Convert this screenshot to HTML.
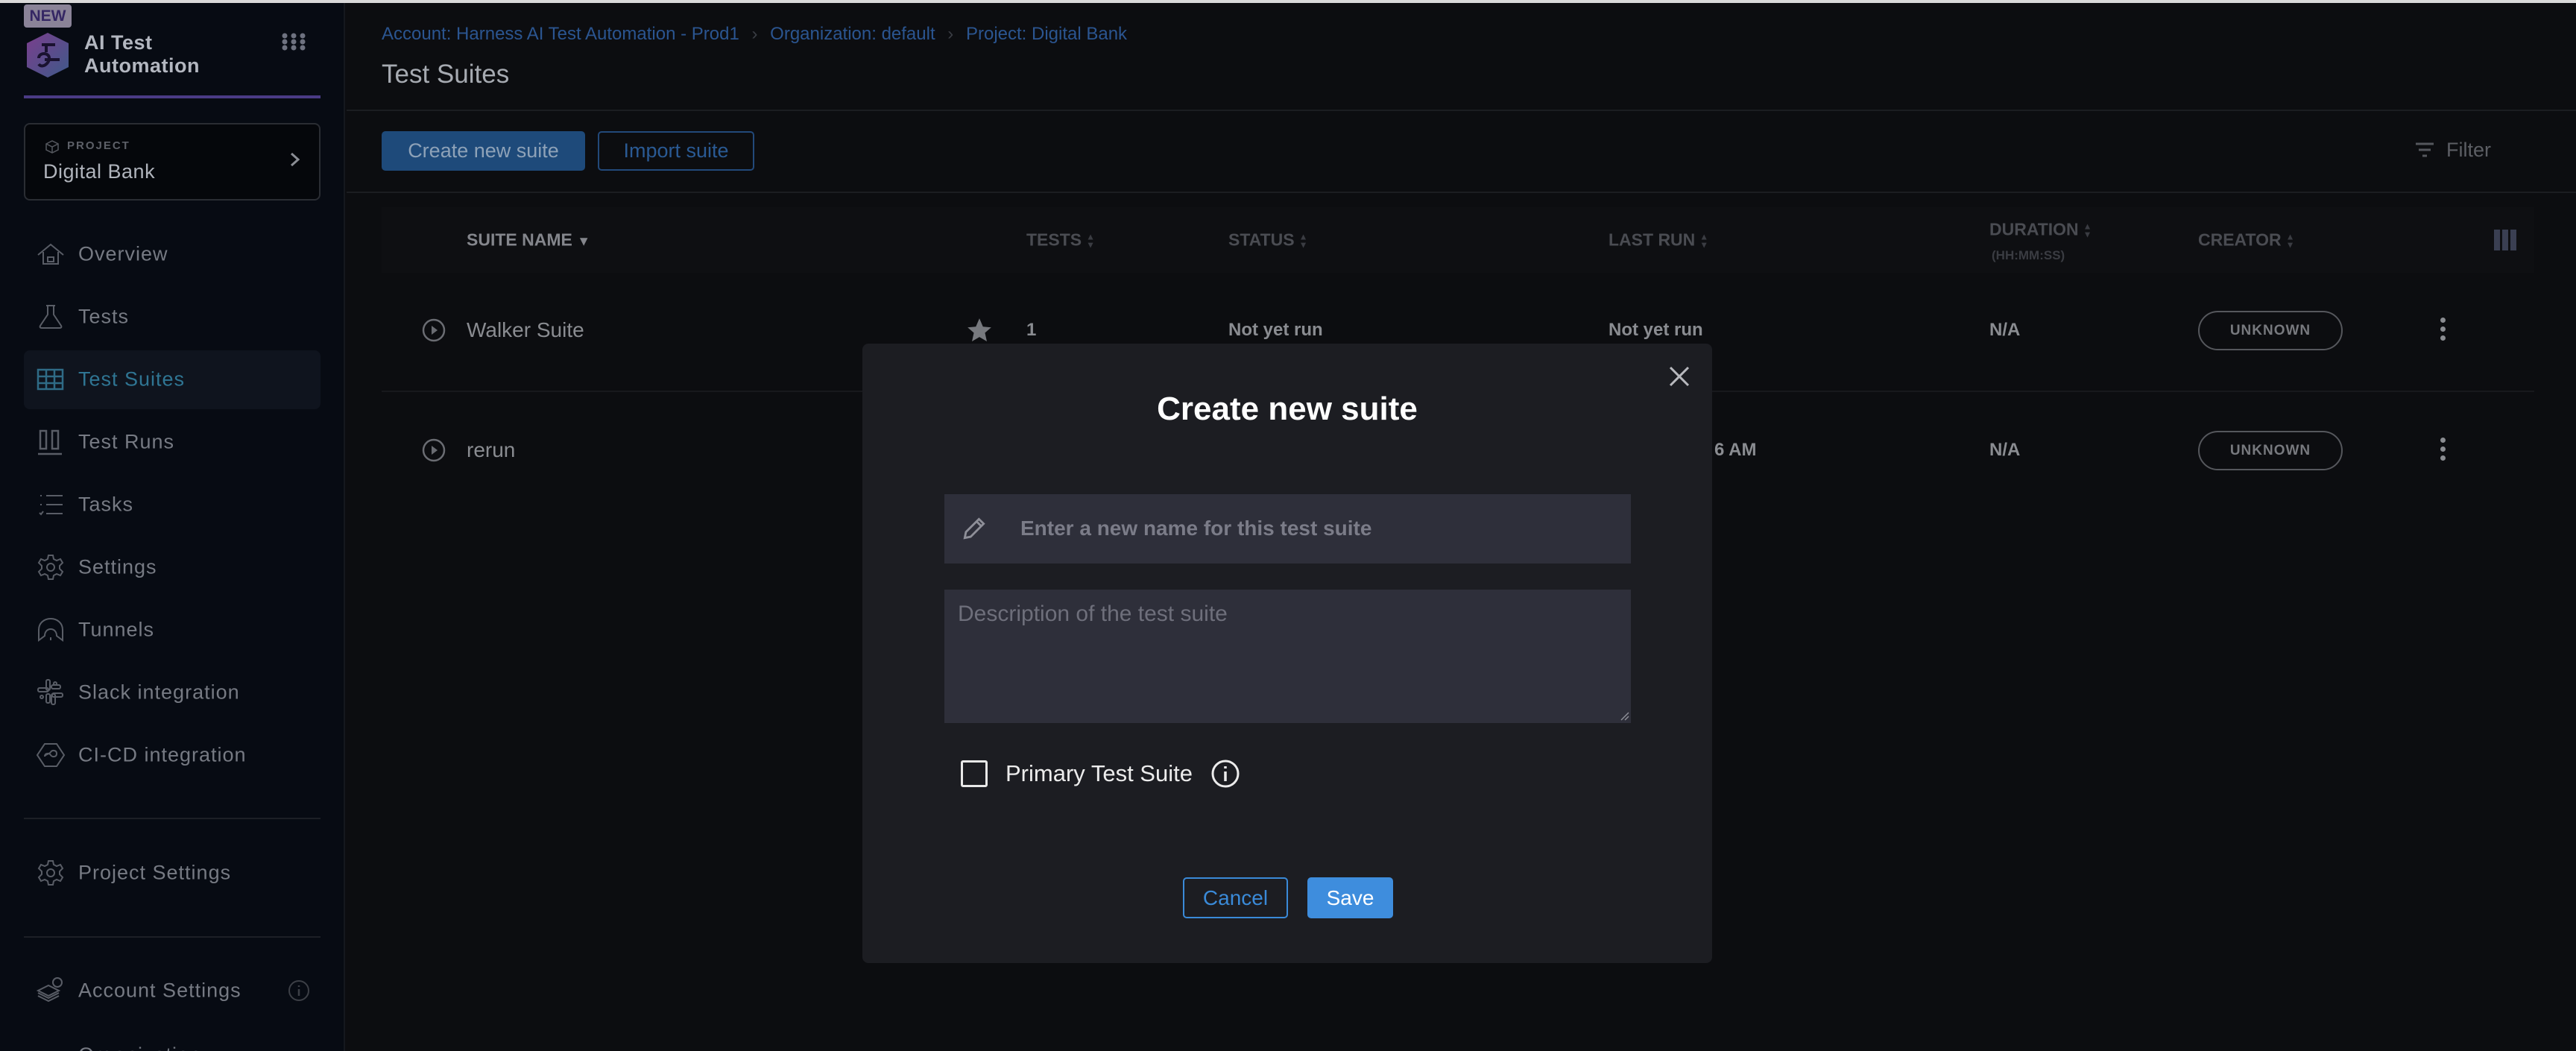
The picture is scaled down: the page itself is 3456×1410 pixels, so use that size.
<!DOCTYPE html>
<html style="overflow:hidden;width:3456px;height:1410px"><head><meta charset="utf-8"><style>
*{box-sizing:border-box;margin:0;padding:0}
body{width:3456px;height:1410px;background:#0c0d10;font-family:"Liberation Sans",sans-serif;overflow:hidden}
#wrap{position:relative;width:3456px;height:1410px;overflow:hidden}
.a{position:absolute;white-space:nowrap}
#top{left:0;top:0;width:3456px;height:4px;background:#d9d9d9}
#side{left:0;top:4px;width:463px;height:1406px;background:#070b13;border-right:2px solid #15181e}
.nav{position:absolute;left:105px;font-size:27px;color:#767a83;letter-spacing:1px;transform:translateY(-50%)}
.ic{position:absolute;left:48px;width:40px;height:40px;transform:translateY(-50%)}
.th{font-size:23px;font-weight:bold;color:#4a4c52;transform:translateY(-50%)}
.td{font-size:24px;font-weight:bold;color:#8a8c91;transform:translateY(-50%)}
.pill{position:absolute;width:194px;height:53px;border:2px solid #55575c;border-radius:27px;color:#77797e;font-size:19px;font-weight:bold;text-align:center;line-height:49px;letter-spacing:1px}
.keb{position:absolute;width:8px}
.keb i{display:block;width:7px;height:7px;border-radius:50%;background:#8a8c91;margin-bottom:5px}
.arr{display:inline-block;vertical-align:middle;margin-left:6px;color:#3a3c42;font-size:12px;line-height:11px}
</style></head><body><div id="wrap">
<div class="a" id="top"></div>
<div class="a" id="side"></div>
<div class="a" style="left:32px;top:6px;width:64px;height:31px;background:#8a8398;border-radius:4px;color:#352764;font-weight:bold;font-size:21px;text-align:center;line-height:31px">NEW</div>
<svg class="a" style="left:34px;top:42px" width="60" height="64" viewBox="0 0 60 64"><defs><linearGradient id="g" x1="0" y1="0" x2="1" y2="1"><stop offset="0" stop-color="#7a3e8c"/><stop offset="1" stop-color="#3e5a8a"/></linearGradient></defs><polygon points="30,2 58,16 58,48 30,62 2,48 2,16" fill="url(#g)"/><path d="M22 18h18M28 18v10M18 36c0-8 14-8 14 0s-10 14-14 8M26 38h20" stroke="#1a1230" stroke-width="4" fill="none"/></svg>
<div class="a" style="left:113px;top:42px;font-size:27px;font-weight:bold;color:#b3b7c0;line-height:31px;letter-spacing:.5px">AI Test<br>Automation</div>
<svg class="a" style="left:378px;top:44px" width="32" height="24"><g fill="#6e7280"><circle cx="4" cy="4" r="3.5"/><circle cx="16" cy="4" r="3.5"/><circle cx="28" cy="4" r="3.5"/><circle cx="4" cy="12" r="3.5"/><circle cx="16" cy="12" r="3.5"/><circle cx="28" cy="12" r="3.5"/><circle cx="4" cy="20" r="3.5"/><circle cx="16" cy="20" r="3.5"/><circle cx="28" cy="20" r="3.5"/></g></svg>
<div class="a" style="left:32px;top:128px;width:398px;height:4px;background:#4a3b85"></div>
<div class="a" style="left:32px;top:165px;width:398px;height:104px;border:2px solid #2a2d33;border-radius:8px;background:#05070b"></div>
<svg class="a" style="left:60px;top:187px" width="20" height="20" viewBox="0 0 20 20"><path d="M2 6l8-4 8 4v8l-8 4-8-4zM2 6l8 4 8-4M10 10v8" stroke="#55585f" stroke-width="1.5" fill="none"/></svg>
<div class="a" style="left:90px;top:187px;font-size:15px;font-weight:bold;color:#5d6068;letter-spacing:2px">PROJECT</div>
<div class="a" style="left:58px;top:215px;font-size:27px;color:#b0b4bc;letter-spacing:.5px">Digital Bank</div>
<svg class="a" style="left:388px;top:203px" width="16" height="22"><path d="M3 3l9 8-9 8" stroke="#8a8d94" stroke-width="3" fill="none"/></svg>
<div class="a" style="left:32px;top:470px;width:398px;height:79px;background:#0f141e;border-radius:8px"></div>
<svg class="ic" style="top:341px" viewBox="0 0 40 40"><path d="M3 21L20 7l17 14M10 17v16h20V17M16 24h8v6h-8z" stroke="#595d66" stroke-width="2" fill="none"/></svg>
<div class="nav" style="top:341px">Overview</div>
<svg class="ic" style="top:425px" viewBox="0 0 40 40"><path d="M14 5h12M16 5v12L6 32c-1 2 0 3 2 3h24c2 0 3-1 2-3L24 17V5" stroke="#595d66" stroke-width="2" fill="none"/></svg>
<div class="nav" style="top:425px">Tests</div>
<svg class="ic" style="top:509px" viewBox="0 0 40 40"><path d="M3 7h33v26H3zM3 16h33M3 25h33M14 7v26M25 7v26" stroke="#2f6b86" stroke-width="2.5" fill="none"/></svg>
<div class="nav" style="top:509px;color:#2f7593">Test Suites</div>
<svg class="ic" style="top:593px" viewBox="0 0 40 40"><path d="M6 5h8v24H6zM22 5h8v24h-8zM3 36h32" stroke="#595d66" stroke-width="2.5" fill="none"/></svg>
<div class="nav" style="top:593px">Test Runs</div>
<svg class="ic" style="top:677px" viewBox="0 0 40 40"><path d="M14 8h22M14 20h22M14 32h22M6 8h2M6 20h2M5 31l2 2 3-4" stroke="#595d66" stroke-width="2" fill="none"/></svg>
<div class="nav" style="top:677px">Tasks</div>
<svg class="ic" style="top:761px" viewBox="0 0 40 40"><circle cx="20" cy="20" r="5" stroke="#595d66" stroke-width="2" fill="none"/><path d="M17 4h6l1 5 4 2 5-2 3 5-4 4v4l4 4-3 5-5-2-4 2-1 5h-6l-1-5-4-2-5 2-3-5 4-4v-4l-4-4 3-5 5 2 4-2z" stroke="#595d66" stroke-width="2" fill="none"/></svg>
<div class="nav" style="top:761px">Settings</div>
<svg class="ic" style="top:845px" viewBox="0 0 40 40"><path d="M4 34V20C4 11 11 5 20 5s16 6 16 15v14l-8-6c0-5-3-9-8-9s-8 4-8 9z" stroke="#595d66" stroke-width="2" fill="none"/><path d="M20 30v4" stroke="#595d66" stroke-width="2"/></svg>
<div class="nav" style="top:845px">Tunnels</div>
<svg class="ic" style="top:929px" viewBox="0 0 40 40"><g stroke="#595d66" stroke-width="2" fill="none"><rect x="14" y="3" width="5" height="14" rx="2"/><rect x="3" y="14" width="14" height="5" rx="2"/><rect x="21" y="22" width="5" height="14" rx="2"/><rect x="22" y="21" width="14" height="5" rx="2"/><circle cx="26" cy="8" r="2"/><circle cx="8" cy="26" r="2"/><rect x="14" y="22" width="5" height="12" rx="2"/><rect x="21" y="10" width="12" height="5" rx="2"/></g></svg>
<div class="nav" style="top:929px">Slack integration</div>
<svg class="ic" style="top:1013px" viewBox="0 0 40 40"><path d="M12 5h16l10 15-10 15H12L2 20z" stroke="#595d66" stroke-width="2" fill="none"/><path d="M12 22c0-5 6-5 8-2s8 3 8-2-6-5-8-2-8 3-8 6" stroke="#595d66" stroke-width="2" fill="none"/></svg>
<div class="nav" style="top:1013px">CI-CD integration</div>
<div class="a" style="left:32px;top:1097px;width:398px;height:2px;background:#1c1f26"></div>
<svg class="ic" style="top:1171px" viewBox="0 0 40 40"><circle cx="20" cy="20" r="5" stroke="#595d66" stroke-width="2" fill="none"/><path d="M17 4h6l1 5 4 2 5-2 3 5-4 4v4l4 4-3 5-5-2-4 2-1 5h-6l-1-5-4-2-5 2-3-5 4-4v-4l-4-4 3-5 5 2 4-2z" stroke="#595d66" stroke-width="2" fill="none"/></svg>
<div class="nav" style="top:1171px">Project Settings</div>
<div class="a" style="left:32px;top:1256px;width:398px;height:2px;background:#1c1f26"></div>
<svg class="ic" style="top:1329px" viewBox="0 0 40 40"><path d="M3 20l14-7 14 7-14 7zM3 27l14 7 14-7M3 23l14 7 14-7" stroke="#595d66" stroke-width="2" fill="none"/><circle cx="29" cy="9" r="6" stroke="#595d66" stroke-width="2" fill="none"/></svg>
<div class="nav" style="top:1329px">Account Settings</div>
<svg class="a" style="left:386px;top:1314px" width="30" height="30"><circle cx="15" cy="15" r="13" stroke="#3c3f46" stroke-width="2" fill="none"/><path d="M15 13v9M15 8v2" stroke="#3c3f46" stroke-width="2.5"/></svg>
<div class="a" style="left:105px;top:1400px;font-size:27px;color:#767a83;letter-spacing:1px">Organization</div>

<!-- main -->
<div class="a" style="left:512px;top:32px;font-size:24px;color:#2b5590">Account: Harness AI Test Automation - Prod1 <span style="color:#3a3d44;margin:0 10px">›</span> Organization: default <span style="color:#3a3d44;margin:0 10px">›</span> Project: Digital Bank</div>
<div class="a" style="left:512px;top:80px;font-size:35px;color:#a6aab1">Test Suites</div>
<div class="a" style="left:465px;top:147px;width:2991px;height:2px;background:#1b1d21"></div>
<div class="a" style="left:512px;top:176px;width:273px;height:53px;background:#1e4a7a;border-radius:5px;color:#8ea2b8;font-size:27px;text-align:center;line-height:53px">Create new suite</div>
<div class="a" style="left:802px;top:176px;width:210px;height:53px;border:2px solid #22497a;border-radius:5px;color:#2a5a94;font-size:27px;text-align:center;line-height:49px">Import suite</div>
<svg class="a" style="left:3240px;top:190px" width="26" height="22"><path d="M1 3h24M5 11h16M10 19h6" stroke="#55575d" stroke-width="3"/></svg>
<div class="a" style="left:3282px;top:186px;font-size:27px;color:#5c5e64">Filter</div>
<div class="a" style="left:465px;top:257px;width:2991px;height:2px;background:#1b1d21"></div>
<div class="a" style="left:512px;top:278px;width:2888px;height:88px;background:#0e0f12"></div>
<div class="a th" style="left:626px;top:322px;color:#84868c">SUITE NAME <span style="font-size:18px">▼</span></div>
<div class="a th" style="left:1377px;top:322px">TESTS<span class="arr">▲<br>▼</span></div>
<div class="a th" style="left:1648px;top:322px">STATUS<span class="arr">▲<br>▼</span></div>
<div class="a th" style="left:2158px;top:322px">LAST RUN<span class="arr">▲<br>▼</span></div>
<div class="a th" style="left:2669px;top:308px">DURATION<span class="arr">▲<br>▼</span></div>
<div class="a" style="left:2672px;top:333px;font-size:17px;font-weight:bold;color:#3a3c42">(HH:MM:SS)</div>
<div class="a th" style="left:2949px;top:322px">CREATOR<span class="arr">▲<br>▼</span></div>
<svg class="a" style="left:3346px;top:308px" width="30" height="28"><g fill="#3a3f52"><rect x="0" y="0" width="8" height="28"/><rect x="11" y="0" width="8" height="28"/><rect x="22" y="0" width="8" height="28"/></g></svg>

<svg class="a" style="left:566px;top:427px" width="32" height="32"><circle cx="16" cy="16" r="14" stroke="#6a6c72" stroke-width="2.5" fill="none"/><path d="M13 10l8 6-8 6z" fill="#6a6c72"/></svg>
<div class="a" style="left:626px;top:443px;font-size:28px;color:#8a8c91;transform:translateY(-50%)">Walker Suite</div>
<svg class="a" style="left:1295px;top:424px" width="38" height="38" viewBox="0 0 24 24"><path d="M12 2l3 7 7 .6-5.3 4.6 1.6 7.3L12 17.8 5.7 21.5l1.6-7.3L2 9.6 9 9z" fill="#77797e"/></svg>
<div class="a td" style="left:1377px;top:443px">1</div>
<div class="a td" style="left:1648px;top:443px">Not yet run</div>
<div class="a td" style="left:2158px;top:443px">Not yet run</div>
<div class="a td" style="left:2669px;top:443px">N/A</div>
<div class="pill" style="left:2949px;top:417px">UNKNOWN</div>
<div class="keb" style="left:3274px;top:426px"><i></i><i></i><i></i></div>
<div class="a" style="left:512px;top:524px;width:2888px;height:2px;background:#17181c"></div>
<svg class="a" style="left:566px;top:588px" width="32" height="32"><circle cx="16" cy="16" r="14" stroke="#6a6c72" stroke-width="2.5" fill="none"/><path d="M13 10l8 6-8 6z" fill="#6a6c72"/></svg>
<div class="a" style="left:626px;top:604px;font-size:28px;color:#8a8c91;transform:translateY(-50%)">rerun</div>
<div class="a td" style="left:2300px;top:604px">6 AM</div>
<div class="a td" style="left:2669px;top:604px">N/A</div>
<div class="pill" style="left:2949px;top:578px">UNKNOWN</div>
<div class="keb" style="left:3274px;top:587px"><i></i><i></i><i></i></div>

<!-- modal -->
<div class="a" style="left:1157px;top:461px;width:1140px;height:831px;background:#1c1d22;border-radius:8px"></div>
<svg class="a" style="left:2238px;top:490px" width="30" height="30"><path d="M3 3l24 24M27 3L3 27" stroke="#b8b9be" stroke-width="3"/></svg>
<div class="a" style="left:1157px;width:1140px;top:524px;text-align:center;font-size:44px;font-weight:bold;color:#fff">Create new suite</div>
<div class="a" style="left:1267px;top:663px;width:921px;height:93px;background:#2e2f3a"></div>
<svg class="a" style="left:1288px;top:690px" width="38" height="38" viewBox="0 0 24 24"><path d="M4 20l1-5L16 4l4 4L9 19zM14 6l4 4" stroke="#8e8f98" stroke-width="1.8" fill="none"/></svg>
<div class="a" style="left:1369px;top:693px;font-size:28px;font-weight:bold;color:#7b7c88">Enter a new name for this test suite</div>
<div class="a" style="left:1267px;top:791px;width:921px;height:179px;background:#2e2f3a"></div>
<svg class="a" style="left:2174px;top:955px" width="12" height="12"><path d="M1 11L11 1M6 11l5-5" stroke="#8e8f98" stroke-width="1.5"/></svg>
<div class="a" style="left:1285px;top:807px;font-size:30px;color:#6e6f7b">Description of the test suite</div>
<div class="a" style="left:1289px;top:1020px;width:36px;height:36px;border:3px solid #e8e8e8;border-radius:3px"></div>
<div class="a" style="left:1349px;top:1020px;font-size:31px;color:#ececec">Primary Test Suite</div>
<svg class="a" style="left:1624px;top:1018px" width="40" height="40"><circle cx="20" cy="20" r="17" stroke="#ececec" stroke-width="3" fill="none"/><path d="M20 17v13M20 10v3" stroke="#ececec" stroke-width="3.5"/></svg>
<div class="a" style="left:1587px;top:1177px;width:141px;height:55px;border:2px solid #3a8ad8;border-radius:5px;color:#3a8ad8;font-size:28px;text-align:center;line-height:51px">Cancel</div>
<div class="a" style="left:1754px;top:1177px;width:115px;height:55px;background:#3e8ddd;border-radius:5px;color:#fff;font-size:28px;text-align:center;line-height:55px">Save</div>
</div></body></html>
